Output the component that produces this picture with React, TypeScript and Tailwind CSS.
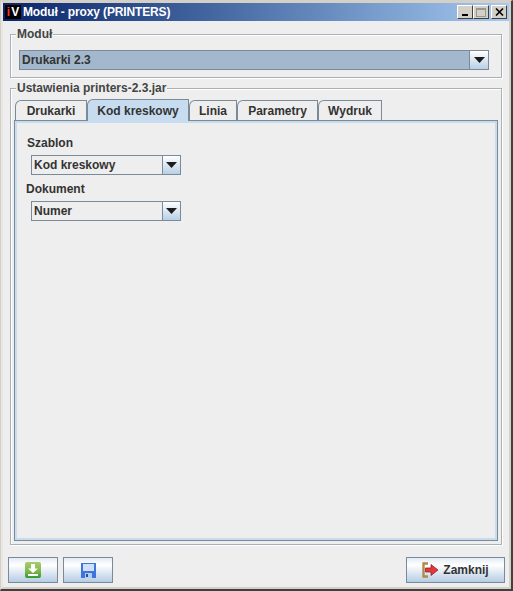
const font = "font-['Liberation_Sans',Arial,sans-serif]";

function Arrow() {
  return (
    <svg width="11" height="6" viewBox="0 0 11 6">
      <path d="M0 0H11L5.5 6Z" fill="#1c1c1c" />
    </svg>
  );
}

function Combo({ value, width }: { value: string; width: string }) {
  return (
    <div className={`flex h-5 ${width} border border-[#7a8a99]`}>
      <div className="flex-1 bg-[#eeeeee] pl-[2px] text-[12px] leading-[18px] font-bold text-[#333333]">{value}</div>
      <div className="flex w-[18px] items-center justify-center border-l border-[#7a8a99] bg-linear-to-b from-white to-[#b8cfe5]">
        <Arrow />
      </div>
    </div>
  );
}

function Tab({ label, width, active }: { label: string; width: string; active?: boolean }) {
  return (
    <div
      className={`${width} flex items-center justify-center rounded-tl-[6px] border border-b-0 border-[#7a8a99] text-[12px] font-bold text-[#333333] ${
        active ? 'h-[22px] bg-[#c8dcf0]' : 'h-[20px] bg-[#eeeeee]'
      }`}
    >
      {label}
    </div>
  );
}

function ToolButton({ children, width }: { children: React.ReactNode; width: string }) {
  return (
    <div className={`flex h-[26px] ${width} items-center justify-center gap-[4px] border border-[#7a8a99] bg-linear-to-b from-[#e3ecf5] via-white via-30% to-[#b5cce3]`}>
      {children}
    </div>
  );
}

export default function App() {
  return (
    <div className={`${font} h-[591px] w-[513px] overflow-hidden border-t border-r-[2px] border-b-[2px] border-l border-t-[#d4d0c8] border-r-[#404040] border-b-[#404040] border-l-[#d4d0c8]`}>
      <div className="flex h-full flex-col border-2 border-[#d4d0c8] border-l-[#e8e6e0] bg-[#eeeeee]">
        {/* title bar */}
        <div className="flex h-[18px] shrink-0 items-center bg-linear-to-r from-[#0a246a] to-[#a6caf0] px-[2px]">
          <div className="mr-[2px] flex h-[14px] w-[16px] items-center justify-center bg-black text-[12px] leading-none font-bold text-white">
            <span className="mr-[1px] text-[#ff3030]">i</span>V
          </div>
          <span className="flex-1 text-[12px] font-bold tracking-[-0.14px] text-white">Moduł - proxy (PRINTERS)</span>
          <div className="flex h-[14px] w-[16px] items-end justify-center border border-t-white border-r-[#404040] border-b-[#404040] border-l-white bg-[#d4d0c8] pb-[2px]">
            <div className="h-[2px] w-[6px] bg-black" />
          </div>
          <div className="flex h-[14px] w-[16px] items-center justify-center border border-t-white border-r-[#404040] border-b-[#404040] border-l-white bg-[#d4d0c8]">
            <div className="h-[9px] w-[10px] border border-t-2 border-[#9a978f]" />
          </div>
          <div className="ml-[2px] flex h-[14px] w-[16px] items-center justify-center border border-t-white border-r-[#404040] border-b-[#404040] border-l-white bg-[#d4d0c8]">
            <svg width="9" height="8" viewBox="0 0 9 8">
              <path d="M1 0.5L8 7.5M8 0.5L1 7.5" stroke="#000" strokeWidth="1.6" />
            </svg>
          </div>
        </div>

        <div className="flex flex-1 flex-col px-[7px] pt-[13px]">
          {/* Modul group */}
          <div className="relative h-[44px] border border-[#a9b0b7] px-[8px] pt-[15px] shadow-[inset_1px_1px_0_white,1px_1px_0_white]">
            <span className="absolute -top-[8px] left-[5px] bg-[#eeeeee] px-[1px] text-[12px] leading-[14px] font-bold text-[#444444]">Moduł</span>
            <div className="flex h-[20px] w-[470px] border border-[#7a8a99]">
              <div className="flex-1 bg-[#a3b8cc] pl-[2px] text-[12px] leading-[18px] font-bold text-[#333333]">Drukarki 2.3</div>
              <div className="flex w-[19px] items-center justify-center border-l border-[#7a8a99] bg-linear-to-b from-white to-[#b8cfe5]">
                <Arrow />
              </div>
            </div>
          </div>

          {/* Ustawienia group */}
          <div className="relative mt-[10px] flex h-[457px] flex-col border border-[#a9b0b7] px-[3px] pt-[10px] pb-[3px] shadow-[inset_1px_1px_0_white,1px_1px_0_white]">
            <span className="absolute -top-[8px] left-[5px] bg-[#eeeeee] px-[1px] text-[12px] leading-[14px] font-bold text-[#444444]">Ustawienia printers-2.3.jar</span>
            <div className="z-10 flex h-[21px] items-end pl-[1px]">
              <Tab label="Drukarki" width="w-[72px]" />
              <div className="mb-[-1px]">
                <Tab label="Kod kreskowy" width="w-[102px]" active />
              </div>
              <Tab label="Linia" width="w-[48px]" />
              <Tab label="Parametry" width="w-[81px]" />
              <Tab label="Wydruk" width="w-[64px]" />
            </div>
            <div className="flex-1 border border-[#7a8a99] bg-[#eeeeee] px-[12px] pt-[15px] shadow-[inset_0_0_0_2px_#c8dcf0]">
              <div className="text-[12px] leading-[14px] font-bold text-[#333333]">Szablon</div>
              <div className="mt-[5px] ml-[4px]">
                <Combo value="Kod kreskowy" width="w-[150px]" />
              </div>
              <div className="mt-[7px] -ml-[1px] text-[12px] leading-[14px] font-bold text-[#333333]">Dokument</div>
              <div className="mt-[5px] ml-[4px]">
                <Combo value="Numer" width="w-[150px]" />
              </div>
            </div>
          </div>

          {/* bottom buttons */}
          <div className="mt-[12px] -mr-[3px] -ml-[2px] flex items-center">
            <ToolButton width="w-[50px]">
              <svg width="16" height="16" viewBox="0 0 16 16">
                <defs>
                  <linearGradient id="dl" x1="0" y1="0" x2="0" y2="1">
                    <stop offset="0" stopColor="#a8cc6a" />
                    <stop offset="0.6" stopColor="#7cb848" />
                    <stop offset="1" stopColor="#2f9a2e" />
                  </linearGradient>
                </defs>
                <rect width="16" height="16" rx="2" fill="url(#dl)" />
                <path d="M6 2H10V6.5H13L8 11L3 6.5H6Z" fill="#fff" />
                <rect x="3" y="12" width="10" height="2" fill="#fff" />
              </svg>
            </ToolButton>
            <div className="ml-[5px]">
              <ToolButton width="w-[50px]">
                <svg width="15" height="15" viewBox="0 0 15 15">
                  <rect width="15" height="15" fill="#3f74dc" />
                  <rect x="2" y="1" width="11" height="7" fill="#cfe0fa" />
                  <rect x="4" y="10" width="7" height="5" fill="#b6cdf0" />
                  <rect x="5" y="11" width="2" height="3" fill="#24509f" />
                </svg>
              </ToolButton>
            </div>
            <div className="ml-auto">
              <ToolButton width="w-[99px]">
                <svg width="17" height="16" viewBox="0 0 17 16">
                  <path d="M6 1.5H1.5V14.5H6" fill="none" stroke="#b08a4a" strokeWidth="2.4" />
                  <path d="M3.5 6H9V2.5L16 8L9 13.5V10H3.5Z" fill="#e8343c" stroke="#7a1c1c" strokeWidth="0.7" />
                </svg>
                <span className="text-[12px] font-bold text-[#333333]">Zamknij</span>
              </ToolButton>
            </div>
          </div>
        </div>
      </div>
    </div>
  );
}
